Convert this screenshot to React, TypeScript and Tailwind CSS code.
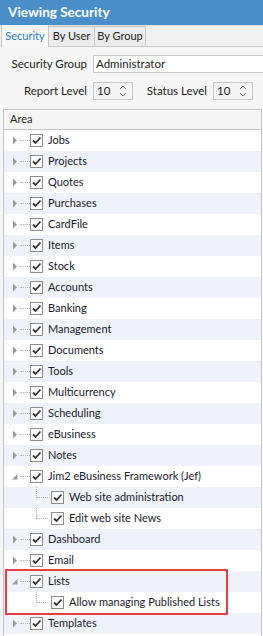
import React from 'react';

type Node = { label: string; open?: boolean; children?: string[]; mark?: boolean };

const AREAS: Node[] = [
  { label: 'Jobs' },
  { label: 'Projects' },
  { label: 'Quotes' },
  { label: 'Purchases' },
  { label: 'CardFile' },
  { label: 'Items' },
  { label: 'Stock' },
  { label: 'Accounts' },
  { label: 'Banking' },
  { label: 'Management' },
  { label: 'Documents' },
  { label: 'Tools' },
  { label: 'Multicurrency' },
  { label: 'Scheduling' },
  { label: 'eBusiness' },
  { label: 'Notes' },
  { label: 'Jim2 eBusiness Framework (Jef)', open: true, children: ['Web site administration', 'Edit web site News'] },
  { label: 'Dashboard' },
  { label: 'Email' },
  { label: 'Lists', open: true, children: ['Allow managing Published Lists'], mark: true },
  { label: 'Templates' },
];

const Check = () => (
  <span className="w-[13px] h-[13px] border border-[#8c8c8c] bg-white flex items-center justify-center shrink-0">
    <svg width="11" height="11" viewBox="0 0 11 11">
      <path d="M2 5.5 L4.5 8 L9.5 2.5" fill="none" stroke="#333" strokeWidth="1.8" />
    </svg>
  </span>
);

const Expander = ({ open }: { open?: boolean }) => (
  <svg width="6" height="9" viewBox="0 0 6 9" className="shrink-0">
    {open ? <path d="M5.5 2 L5.5 7.5 L0 7.5 Z" fill="#9a9a9a" /> : <path d="M1 0.5 L5 4.5 L1 8.5 Z" fill="#9a9a9a" />}
  </svg>
);

const Spinner = ({ value }: { value: string }) => (
  <div className="w-[40px] h-[18px] border border-[#c8c8c8] bg-[#f4f4f4] flex items-center">
    <span className="pl-[3px] flex-1">{value}</span>
    <svg width="8" height="14" viewBox="0 0 8 14" className="mr-[5px]">
      <path d="M1 5 L4 2 L7 5 M1 9 L4 12 L7 9" fill="none" stroke="#777" strokeWidth="1" />
    </svg>
  </div>
);

const Row = ({ tint, children }: { tint: boolean; children: React.ReactNode }) => (
  <div className={`h-[21px] flex items-center ${tint ? 'bg-[#eff2f8]' : 'bg-white'}`}>{children}</div>
);

export default function App() {
  let idx = 0;
  const rows: React.ReactNode[] = [];
  AREAS.forEach((n) => {
    const parentRow = (
      <Row key={n.label} tint={idx % 2 === 1}>
        <span className="w-[8px] shrink-0" />
        <Expander open={n.open} />
        <span className="w-[10px] ml-[2px] border-t border-dotted border-[#b4b4b4] shrink-0" />
        <Check />
        <span className="ml-[5px] text-[#1a1a2e] whitespace-nowrap">{n.label}</span>
      </Row>
    );
    idx++;
    if (!n.children) {
      rows.push(parentRow);
      return;
    }
    const kids = n.children.map((c) => {
      const r = (
        <Row key={c} tint={idx % 2 === 1}>
          <span className="w-[32px] shrink-0" />
          <span className="w-[12px] h-[11px] shrink-0 border-l border-b border-dotted border-[#b4b4b4] self-start" />
          <span className="w-[3px] shrink-0" />
          <Check />
          <span className="ml-[5px] text-[#1a1a2e] whitespace-nowrap">{c}</span>
        </Row>
      );
      idx++;
      return r;
    });
    if (n.mark) {
      rows.push(
        <div key={n.label + '-box'} className="relative">
          {parentRow}
          {kids}
          <div className="absolute z-10 left-[1px] top-[-2px] w-[223px] h-[46px] border-2 border-[#ea3c44] pointer-events-none" />
        </div>
      );
    } else {
      rows.push(parentRow, ...kids);
    }
  });

  return (
    <div
      className="w-[263px] h-[636px] overflow-hidden bg-[#f5f5f5] text-[11px] text-[#222] flex flex-col"
      style={{ fontFamily: 'Lato, "Liberation Sans", sans-serif' }}
    >
      <div className="h-[25px] bg-[#4a8dcb] text-white font-bold text-[13.5px] flex items-center pl-[8px] shrink-0">
        Viewing Security
      </div>
      <div className="h-[22px] flex items-end pl-[1px] bg-[#f0f0f0] border-t border-[#dcdcdc] shrink-0 text-[11px]">
        <div className="h-[22px] w-[48px] flex items-center justify-center bg-[#f7f7f7] text-[#2b7bd0] border-l border-r border-[#c8c8c8]">
          Security
        </div>
        <div className="h-[21px] w-[46px] flex items-center justify-center bg-[#ececec] border-r border-t border-b border-[#c8c8c8]">
          By User
        </div>
        <div className="h-[21px] w-[51px] flex items-center justify-center bg-[#ececec] border-r border-t border-b border-[#c8c8c8]">
          By Group
        </div>
        <div className="flex-1 border-b border-[#c8c8c8]" />
      </div>
      <div className="flex flex-col pt-[8px] shrink-0 text-[11.5px]">
        <div className="flex items-center h-[18px]">
          <span className="w-[93px] text-right pr-[6px] whitespace-nowrap">Security Group</span>
          <div className="flex-1 h-[18px] border border-[#c8c8c8] bg-white pl-[2px] flex items-center -mr-[4px]">
            Administrator
          </div>
        </div>
        <div className="flex items-center h-[18px] mt-[9px]">
          <span className="w-[93px] text-right pr-[6px] whitespace-nowrap">Report Level</span>
          <Spinner value="10" />
          <span className="w-[80px] text-right pr-[6px] whitespace-nowrap">Status Level</span>
          <Spinner value="10" />
        </div>
      </div>
      <div className="mt-[9px] ml-[3px] mr-[1px] flex-1 border-l border-t border-r border-[#c4c4c4] bg-white flex flex-col overflow-hidden">
        <div className="h-[20px] bg-[#f5f5f5] border-b border-[#c8c8c8] flex items-center pl-[6px] shrink-0">
          Area
        </div>
        <div className="relative">
          <div className="absolute left-[10px] top-0 bottom-0 border-l border-dotted border-[#d4d4d4]" />
          <div className="relative">{rows}</div>
        </div>
      </div>
    </div>
  );
}
